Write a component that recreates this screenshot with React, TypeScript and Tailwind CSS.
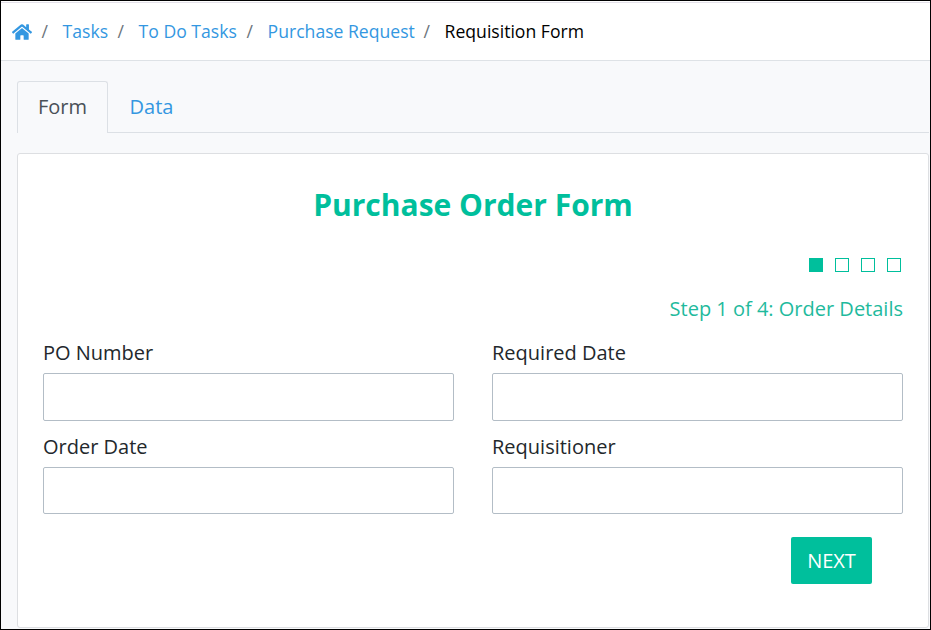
import React from "react";
import { FaHome } from "react-icons/fa";

function Crumb({ label, className }: { label: string; className: string }) {
  return (
    <a href="#" className={`block shrink-0 ${className}`}>
      {label}
    </a>
  );
}

function Slash({ className }: { className: string }) {
  return <span className={`block w-[9px] shrink-0 text-[#6c757d] ${className}`}>/</span>;
}

function Field({ id, label, height }: { id: string; label: string; height: string }) {
  return (
    <div>
      <label htmlFor={id} className="block h-[33px] leading-[26px] text-[#23282c]">
        {label}
      </label>
      <input
        id={id}
        className={`block w-full rounded-[2px] border border-[#b3bdc6] bg-white px-3 outline-none ${height}`}
      />
    </div>
  );
}

export default function App() {
  return (
    <div className="flex h-[630px] w-[931px] flex-col overflow-hidden border border-black bg-[#f8f9fb] font-['Open_Sans','Noto_Sans',sans-serif] text-[20px] whitespace-nowrap">
      <nav className="flex h-[60px] shrink-0 border-b border-[#dee2e6] bg-white pt-px text-[17.6px] text-[#3397e1]">
        <div className="flex w-full items-center border-t border-[#e4e1ea] pl-[11px]">
          <FaHome className="size-[20px] shrink-0" />
          <Slash className="ml-[9.6px]" />
          <Crumb label="Tasks" className="ml-[12px] w-[46px]" />
          <Slash className="ml-[9px]" />
          <Crumb label="To Do Tasks" className="ml-[12px] w-[99px]" />
          <Slash className="ml-[9px]" />
          <Crumb label="Purchase Request" className="ml-[12px] w-[147px]" />
          <Slash className="ml-[9px]" />
          <span className="ml-[12px] text-black">Requisition Form</span>
        </div>
      </nav>
      <main className="flex flex-1 flex-col pt-5 pr-px pb-px pl-4">
        <div className="flex h-[52px] shrink-0 border-b border-[#dce0e5]">
          <button className="-mb-px h-[52px] w-[91px] rounded-t-[3px] border border-b-0 border-[#dce0e5] bg-[#f8f9fb] pb-0.5 text-[#495057]">
            Form
          </button>
          <button className="w-[87px] text-[#3397e1]">Data</button>
        </div>
        <section className="mt-5 flex flex-1 flex-col rounded-[3px] border border-[#dddfe2] bg-white px-[25px]">
          <h1 className="mt-[30px] h-[41px] text-center text-[30px] leading-[41px] font-bold text-[#00bf9c]">
            Purchase Order Form
          </h1>
          <div className="mt-[33px] flex justify-end gap-3 pr-0.5">
            <span className="size-[14px] bg-[#00bf9c]" />
            <span className="size-[14px] border border-[#00bf9c]" />
            <span className="size-[14px] border border-[#00bf9c]" />
            <span className="size-[14px] border border-[#00bf9c]" />
          </div>
          <p className="mt-[23px] h-[27px] text-right leading-[27px] text-[#1fba9d]">
            Step 1 of 4: Order Details
          </p>
          <div className="mt-[18px] grid grid-cols-[411px_411px] justify-between gap-y-[13px]">
            <Field id="po-number" label="PO Number" height="h-[48px]" />
            <Field id="required-date" label="Required Date" height="h-[48px]" />
            <Field id="order-date" label="Order Date" height="h-[47px]" />
            <Field id="requisitioner" label="Requisitioner" height="h-[47px]" />
          </div>
          <button className="mt-[23px] mr-[31px] h-[47px] w-[81px] self-end rounded-[2px] bg-[#00bf9c] text-white">
            NEXT
          </button>
        </section>
      </main>
    </div>
  );
}
